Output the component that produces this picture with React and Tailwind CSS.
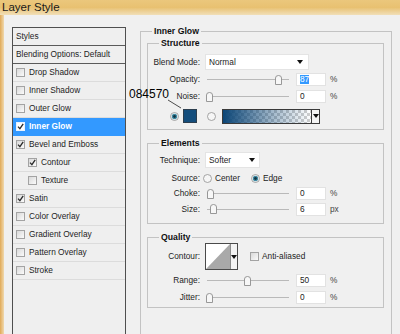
import clsx from "clsx";

const styleRows = [
  { label: "Drop Shadow" },
  { label: "Inner Shadow" },
  { label: "Outer Glow" },
  { label: "Inner Glow", checked: true, selected: true },
  { label: "Bevel and Emboss", checked: true },
  { label: "Contour", checked: true, indent: true },
  { label: "Texture", indent: true },
  { label: "Satin", checked: true },
  { label: "Color Overlay" },
  { label: "Gradient Overlay" },
  { label: "Pattern Overlay" },
  { label: "Stroke" },
];

function Check({ checked, white }) {
  return (
    <span
      className={clsx(
        "flex h-[9px] w-[9px] shrink-0 items-center justify-center border",
        white ? "border-[#e8f2ff] bg-white" : "border-[#a3a3a3] bg-linear-to-br from-[#d9d9d9] to-[#fbfbfb]"
      )}
    >
      {checked && (
        <svg width="7" height="7" viewBox="0 0 7 7">
          <path d="M1 3.6 L2.9 5.6 L6.2 0.8" stroke="#2b2b2b" strokeWidth="1.3" fill="none" />
        </svg>
      )}
    </span>
  );
}

function Radio({ on }) {
  return (
    <svg width="9" height="9" viewBox="0 0 9 9" className="shrink-0">
      <circle cx="4.5" cy="4.5" r="4" fill="#f6f6f6" stroke="#8f8f8f" strokeWidth="0.8" />
      {on && <circle cx="4.5" cy="4.5" r="2.7" fill="#3f8aa3" />}
      {on && <circle cx="4.5" cy="4.5" r="1.4" fill="#123543" />}
    </svg>
  );
}

function Arrow() {
  return (
    <svg width="6" height="4" viewBox="0 0 6 4">
      <path d="M0 0 H6 L3 4 Z" fill="#111" />
    </svg>
  );
}

function Label({ children }) {
  return <span className="flex w-[46px] shrink-0 justify-end whitespace-nowrap">{children}</span>;
}

function Slider({ at }) {
  return (
    <div className="relative ml-[5px] flex h-full w-[84px] items-center">
      <div className="ml-[2px] h-px w-full bg-[#b9b9b9]" />
      <svg
        width="7"
        height="10"
        viewBox="0 0 7 10"
        className="absolute top-1/2 -translate-y-1/2"
        style={{ left: at - 3.5 }}
      >
        <path d="M0.5 3 Q0.5 0.5 3.5 0.5 Q6.5 0.5 6.5 3 V9.5 H0.5 Z" fill="#f7f7f7" stroke="#8d8d8d" strokeWidth="0.9" />
      </svg>
    </div>
  );
}

function Field({ value, unit, picked }) {
  return (
    <>
      <div className="ml-[7px] flex h-[13px] w-[30px] items-center border border-[#e2e2e2] bg-white pl-[3px]">
        <span className={clsx(picked && "bg-[#3399ff] text-white")}>{value}</span>
      </div>
      <span className="ml-[4px] text-[#444]">{unit}</span>
    </>
  );
}

function Group({ title, className, children }) {
  return (
    <fieldset className={clsx("border border-[#c3c3c3] px-[6px]", className)}>
      <legend className="ml-[5px] px-[2px] text-[8.7px] leading-[10px] font-bold text-[#111]">{title}</legend>
      {children}
    </fieldset>
  );
}

export default function App() {
  return (
    <div className="relative h-[334px] w-[400px] overflow-hidden bg-[#f0f0f0] font-['Liberation_Sans',Arial,sans-serif] text-[8.3px] leading-none text-[#1d1d1d]">
      <div className="flex h-[15px] items-center bg-linear-to-b from-[#ebc77c] via-[#e8c171] to-[#f1dfb8] pl-[2px] text-[11.5px] text-[#1a1a1a]">
        Layer Style
      </div>

      <div className="flex h-[319px]">
        <div className="w-[4px] shrink-0 bg-linear-to-r from-[#e0aa57] to-[#f0d9ad]" />

        <div className="ml-[8px] mt-[12px] h-[320px] w-[114px] shrink-0 border border-[#4f4f4f] bg-[#efefef]">
          <div className="flex h-[18px] items-center border-b border-[#5a5a5a] pl-[3px]">Styles</div>
          <div className="flex h-[18px] items-center border-b border-[#5a5a5a] pl-[3px]">Blending Options: Default</div>
          {styleRows.map((r) => (
            <div
              key={r.label}
              className={clsx(
                "flex h-[18px] items-center gap-[4px] border-b",
                r.indent ? "pl-[15px]" : "pl-[3px]",
                r.selected ? "border-[#3399ff] bg-[#3399ff] font-bold text-white" : "border-[#dcdcdc]"
              )}
            >
              <Check checked={r.checked} white={r.selected} />
              {r.label}
            </div>
          ))}
        </div>

        <Group title="Inner Glow" className="ml-[14px] mt-[11px] h-[330px] w-[252px] shrink-0 pr-[7px] pt-[2px]">
          <Group title="Structure" className="pb-[5px] pt-[6px]">
            <div className="flex h-[16px] items-center">
              <Label>Blend Mode:</Label>
              <div className="ml-[5px] flex h-[16px] w-[104px] items-center justify-between border border-[#e4e4e4] bg-white pl-[3px] pr-[5px]">
                Normal
                <Arrow />
              </div>
            </div>
            <div className="mt-[1px] flex h-[17px] items-center">
              <Label>Opacity:</Label>
              <Slider at={73} />
              <Field value="87" unit="%" picked />
            </div>
            <div className="flex h-[17px] items-center">
              <Label>Noise:</Label>
              <Slider at={4} />
              <Field value="0" unit="%" />
            </div>
            <div className="mt-[3px] flex h-[16px] items-center pl-[16px]">
              <Radio on />
              <div className="ml-[4px] h-[14px] w-[14px] border border-[#2c3e4e] bg-[#134d7c]" />
              <div className="ml-[10px]">
                <Radio />
              </div>
              <div className="ml-[6px] flex h-[15px] w-[98px] border border-[#3a3a3a]">
                <div className="h-full w-[88px] bg-[image:linear-gradient(to_right,#0c4677,rgba(12,70,119,0.35)_60%,transparent),repeating-conic-gradient(#cfcfcf_0_25%,#ffffff_0_50%)] bg-[length:100%_100%,6px_6px]" />
                <div className="flex flex-1 items-center justify-center border-l border-[#3a3a3a] bg-[#f4f4f4]">
                  <Arrow />
                </div>
              </div>
            </div>
          </Group>

          <Group title="Elements" className="mt-[8px] pb-[6px] pt-[4px]">
            <div className="flex h-[16px] items-center">
              <Label>Technique:</Label>
              <div className="ml-[5px] flex h-[16px] w-[55px] items-center justify-between border border-[#e4e4e4] bg-white pl-[3px] pr-[4px]">
                Softer
                <Arrow />
              </div>
            </div>
            <div className="mt-[2px] flex h-[16px] items-center">
              <Label>Source:</Label>
              <div className="ml-[3px]">
                <Radio />
              </div>
              <span className="ml-[3px]">Center</span>
              <div className="ml-[11px]">
                <Radio on />
              </div>
              <span className="ml-[3px]">Edge</span>
            </div>
            <div className="flex h-[15px] items-center">
              <Label>Choke:</Label>
              <Slider at={5} />
              <Field value="0" unit="%" />
            </div>
            <div className="flex h-[16px] items-center">
              <Label>Size:</Label>
              <Slider at={8} />
              <Field value="6" unit="px" />
            </div>
          </Group>

          <Group title="Quality" className="mt-[8px] pb-[1px] pt-[1px]">
            <div className="flex h-[27px] items-center">
              <Label>Contour:</Label>
              <div className="ml-[5px] flex h-[27px] w-[33px] border border-[#4a4a4a] bg-white">
                <svg width="24" height="25" viewBox="0 0 24 25" className="shrink-0">
                  <path d="M0 25 L24 0 V25 Z" fill="#a9a9a9" />
                </svg>
                <div className="flex flex-1 items-center justify-center border-l border-[#8a8a8a] bg-[#f3f3f3]">
                  <Arrow />
                </div>
              </div>
              <div className="ml-[12px]">
                <Check />
              </div>
              <span className="ml-[3px]">Anti-aliased</span>
            </div>
            <div className="mt-[2px] flex h-[17px] items-center">
              <Label>Range:</Label>
              <Slider at={42} />
              <Field value="50" unit="%" />
            </div>
            <div className="flex h-[17px] items-center">
              <Label>Jitter:</Label>
              <Slider at={4} />
              <Field value="0" unit="%" />
            </div>
          </Group>
        </Group>
      </div>

      <span className="absolute left-[129px] top-[88px] text-[12px] leading-[12px] text-black">084570</span>
      <svg className="absolute left-0 top-0" width="400" height="334" viewBox="0 0 400 334" pointerEvents="none">
        <path d="M168 100 L181 108" stroke="#222" strokeWidth="0.8" />
      </svg>
    </div>
  );
}
